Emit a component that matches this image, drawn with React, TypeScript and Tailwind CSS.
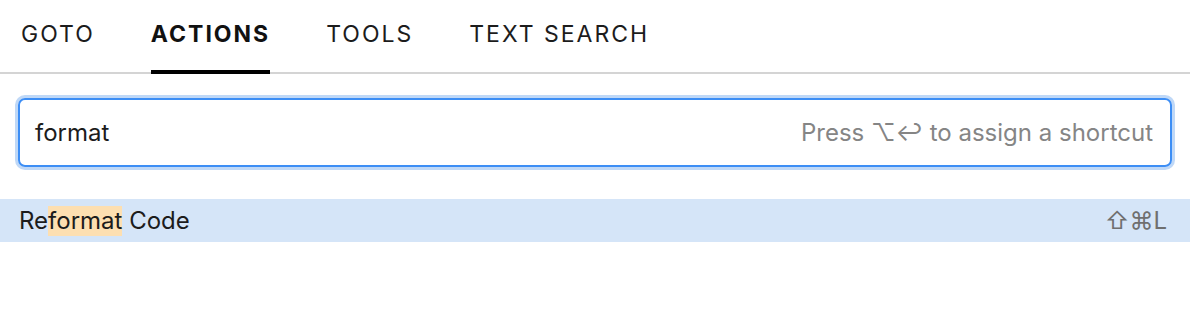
import * as React from 'react';

const tabs = ['GOTO', 'ACTIONS', 'TOOLS', 'TEXT SEARCH'];

export default function App() {
    const active = 'ACTIONS';

    return (
        <div className="w-[1190px] h-[320px] bg-white font-['Inter','Noto_Sans','DejaVu_Sans',sans-serif] text-[#1c1c1c]">
            <div className="flex gap-[56px] pl-[21px] h-[74px] border-b-2 border-[#d4d4d4]">
                {tabs.map((tab) =>
                    <div
                        key={tab}
                        className={tab === active
                            ? "h-[74px] flex items-center pb-[1px] border-b-4 border-black text-[23px] tracking-[2px] font-bold text-[#111]"
                            : "h-[74px] flex items-center pb-[1px] border-b-4 border-transparent text-[23px] tracking-[2px] text-[#1c1c1c]"}
                    >
                        {tab}
                    </div>
                )}
            </div>

            <div className="mx-[18px] mt-[24px] h-[69px] flex items-center justify-between px-[15px] pr-[17px] border-2 border-[#3d8ef5] rounded-[7px] ring-[3px] ring-[#bfd8f7]">
                <span className="text-[24px]">format</span>
                <span className="text-[24px] text-[#858585]">Press ⌥↩ to assign a shortcut</span>
            </div>

            <div className="mt-[32px] h-[43px] flex items-center justify-between pl-[19px] pr-[23px] bg-[#d5e5f8]">
                <span className="text-[24px]">
                    Re<span className="inline-block leading-[30px] bg-[#fddfb1]">format</span> Code
                </span>
                <span className="text-[24px] text-[#6f6f6f]">⇧⌘L</span>
            </div>
        </div>
    );
}
